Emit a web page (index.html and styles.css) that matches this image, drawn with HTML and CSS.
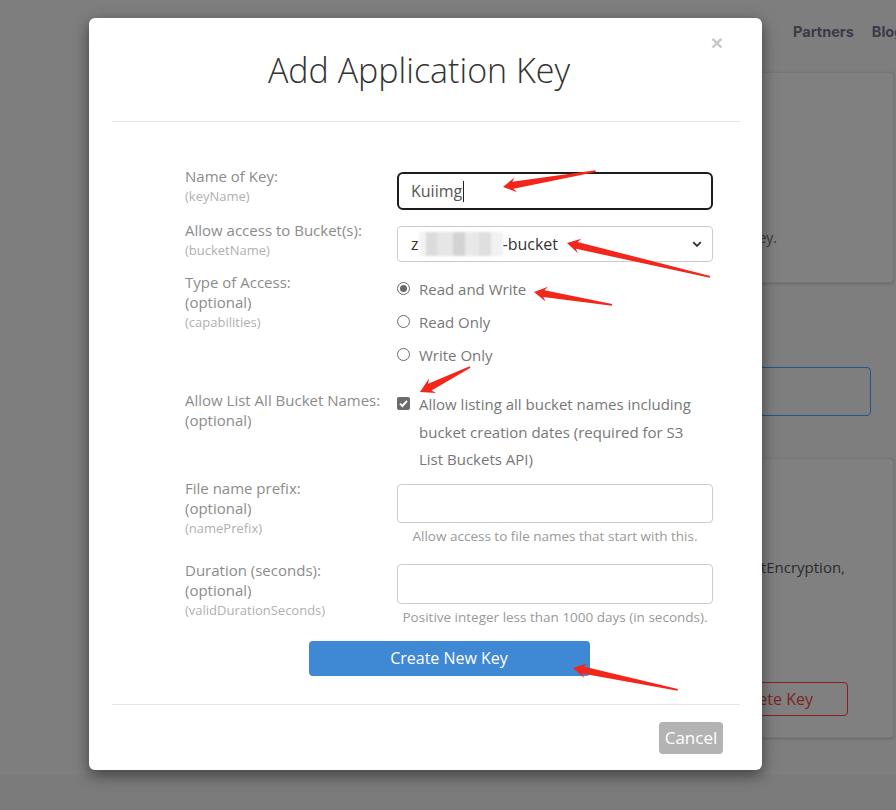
FILE: index.html
```html
<!DOCTYPE html>
<html lang="en">
<head>
<meta charset="utf-8">
<title>Add Application Key</title>
<link rel="stylesheet" href="styles.css">
</head>
<body>
<div class="page">
  <nav class="topnav"><span>Partners</span><span>Blog</span></nav>
  <section class="card card-a"><p class="card-text">Click the Add a New Application Key button to create a key.</p></section>
  <div class="bluebox"></div>
  <section class="card card-b">
    <p class="card-text2">writeFiles, deleteFiles, readBucketEncryption,</p>
    <button class="btn-delete">Delete Key</button>
  </section>
  <footer class="footer"></footer>
</div>

<div class="modal">
  <button class="close">×</button>
  <div class="modal-header"><h1 class="title">Add Application Key</h1></div>
  <div class="modal-body">
    <form class="form">
      <div class="label"><div>Name of Key:</div><div class="sub">(keyName)</div></div>
      <div class="field"><div class="input focused">Kuiimg<span class="caret"></span></div></div>

      <div class="label"><div>Allow access to Bucket(s):</div><div class="sub">(bucketName)</div></div>
      <div class="field"><div class="select"><span class="sel-text">z<span class="mosaic"></span>-bucket</span>
        <svg class="chev" width="10" height="7" viewBox="0 0 10 7"><path d="M1.2 1.2 L5 5 L8.8 1.2" fill="none" stroke="#333" stroke-width="1.8"/></svg></div></div>

      <div class="label"><div>Type of Access:</div><div>(optional)</div><div class="sub">(capabilities)</div></div>
      <div class="field radios">
        <div class="radio-item"><span class="radio on"></span>Read and Write</div>
        <div class="radio-item"><span class="radio"></span>Read Only</div>
        <div class="radio-item"><span class="radio"></span>Write Only</div>
      </div>

      <div class="label row4"><div>Allow List All Bucket Names:</div><div>(optional)</div></div>
      <div class="field row4 check-row">
        <span class="checkbox"><svg width="13" height="13" viewBox="0 0 13 13"><path d="M3 6.6 L5.4 9 L10 3.8" fill="none" stroke="#fff" stroke-width="1.9"/></svg></span>
        <span class="check-text">Allow listing all bucket names including bucket creation dates (required for S3 List Buckets API)</span>
      </div>

      <div class="label row5"><div>File name prefix:</div><div>(optional)</div><div class="sub">(namePrefix)</div></div>
      <div class="field row5"><div class="input plain"></div><div class="hint">Allow access to file names that start with this.</div></div>

      <div class="label row6"><div>Duration (seconds):</div><div>(optional)</div><div class="sub">(validDurationSeconds)</div></div>
      <div class="field row6"><div class="input plain tall"></div><div class="hint">Positive integer less than 1000 days (in seconds).</div></div>

      <div class="actions"><button type="button" class="btn-primary">Create New Key</button></div>
    </form>
  </div>
  <div class="modal-footer"><button class="btn-cancel">Cancel</button></div>
</div>

<svg class="annotations" width="896" height="810" viewBox="0 0 896 810">
  <g fill="#f2261b">
    <polygon points="0,0 13,7.5 10,3.5 94,0.9 94,-0.9 10,-3.5 13,-7.5" transform="translate(503 187) rotate(-9.76)"/>
    <polygon points="0,0 13,7.5 10,3.5 147,0.9 147,-0.9 10,-3.5 13,-7.5" transform="translate(567 243) rotate(13.37)"/>
    <polygon points="0,0 13,7.5 10,3.5 79,0.9 79,-0.9 10,-3.5 13,-7.5" transform="translate(534 292) rotate(9.46)"/>
    <polygon points="0,0 14,8 11,3.8 56,0.9 56,-0.9 11,-3.8 14,-8" transform="translate(420 392) rotate(-26.57)"/>
    <polygon points="0,0 13,7.5 10,3.5 107,0.9 107,-0.9 10,-3.5 13,-7.5" transform="translate(573 668) rotate(11.83)"/>
  </g>
</svg>
</body>
</html>
```

FILE: styles.css
```css
* { box-sizing: border-box; }
html, body { margin: 0; padding: 0; }
body {
  width: 896px;
  height: 810px;
  overflow: hidden;
  position: relative;
  font-family: "Open Sans", "Liberation Sans", sans-serif;
  background: #808080;
}

/* background page (dimmed) */
.page {
  display: flex;
  flex-direction: column;
  height: 810px;
  background: #7e7e7e;
}
.topnav {
  height: 62px;
  display: flex;
  align-items: center;
  gap: 18px;
  padding-left: 793px;
  white-space: nowrap;
  font-family: Inter, "Noto Sans", sans-serif;
  font-weight: 700;
  font-size: 14.5px;
  color: #3a3a48;
}
.card {
  margin-left: 120px;
  margin-right: 2px;
  background: #808080;
  border: 1px solid #767676;
  border-radius: 4px;
  box-shadow: 0 1px 3px rgba(0,0,0,0.18);
}
.card-a {
  margin-top: 10px;
  height: 211px;
  display: flex;
  flex-direction: column;
  justify-content: flex-end;
  padding: 0 116px 34px 0;
}
.card-text {
  margin: 0;
  text-align: right;
  white-space: nowrap;
  overflow: hidden;
  font-size: 14px;
  line-height: 20px;
  color: #3a3a3a;
}
.bluebox {
  margin: 84px 25px 0 120px;
  height: 49px;
  border: 1.5px solid #24558c;
  border-radius: 4px;
}
.card-b {
  margin-top: 42px;
  height: 280px;
  display: flex;
  flex-direction: column;
  align-items: flex-end;
  padding: 98px 0 0 0;
}
.card-text2 {
  margin: 0;
  padding-right: 48px;
  white-space: nowrap;
  overflow: hidden;
  max-width: 100%;
  font-size: 15px;
  line-height: 20px;
  color: #2c2c2c;
}
.btn-delete {
  margin-top: 105px;
  margin-right: 45px;
  width: 200px;
  height: 34px;
  background: transparent;
  border: 1px solid #8a1f1f;
  border-radius: 4px;
  font-family: "Open Sans", sans-serif;
  font-size: 16px;
  color: #7c2424;
  text-align: right;
  padding-right: 34px;
}
.footer {
  margin-top: 37px;
  flex: 1;
  background: #7b7b7b;
}

/* modal */
.modal {
  position: absolute;
  left: 89px;
  top: 18px;
  width: 673px;
  height: 752px;
  background: #fff;
  border-radius: 6px;
  box-shadow: 0 5px 15px rgba(0,0,0,0.5);
  display: flex;
  flex-direction: column;
}
.close {
  position: absolute;
  top: 13px;
  right: 39px;
  border: 0;
  background: none;
  padding: 0;
  font-family: "Liberation Sans", sans-serif;
  font-weight: 700;
  font-size: 21px;
  line-height: 24px;
  color: #c8c8c8;
}
.modal-header {
  margin: 0 22px 0 23px;
  height: 104px;
  padding-top: 32px;
  border-bottom: 1px solid #e5e5e5;
}
.title {
  margin: 0;
  padding-right: 14px;
  text-align: center;
  font-weight: 300;
  font-size: 34px;
  line-height: 40px;
  color: #333;
}
.modal-body {
  margin: 0 22px 0 23px;
  padding: 44px 0 28px 73px;
  border-bottom: 1px solid #e5e5e5;
}
.form {
  display: grid;
  grid-template-columns: 212px 316px;
  row-gap: 10px;
}
.label {
  font-size: 15px;
  line-height: 20px;
  color: #8c8c8c;
}
.label .sub {
  font-size: 13px;
  color: #b0b0b0;
}
.field { min-width: 0; }
.input, .select {
  margin-top: 6px;
  height: 38px;
  border: 1px solid #ccc;
  border-radius: 4px;
  font-size: 16px;
  line-height: 20px;
  color: #555;
}
.input.focused {
  border: 2px solid #1c1c1c;
  border-radius: 6px;
  padding: 7px 12px;
  display: flex;
  align-items: center;
}
.caret {
  display: inline-block;
  width: 1px;
  height: 21px;
  margin-left: 1px;
  background: #222;
}
.select {
  height: 36px;
  display: flex;
  align-items: center;
  padding: 0 10px 0 13px;
  color: #333;
}
.sel-text { white-space: nowrap; }
.mosaic {
  display: inline-block;
  vertical-align: -6px;
  width: 84px;
  height: 24px;
  background:
    linear-gradient(90deg, #f2f2f2 0 8%, #d8d8d8 8% 22%, #e4e4e4 22% 40%, #cfcfcf 40% 55%, #e6e6e6 55% 72%, #dcdcdc 72% 86%, #f0f0f0 86% 100%);
  filter: blur(1.2px);
  opacity: 0.9;
}
.chev { margin-left: auto; }

.radios { display: flex; flex-direction: column; }
.radio-item {
  height: 33px;
  display: flex;
  align-items: center;
  font-size: 15px;
  color: #777;
}
.radio {
  width: 13px;
  height: 13px;
  margin-right: 9px;
  border: 1px solid #6a6a6a;
  border-radius: 50%;
  display: inline-flex;
  align-items: center;
  justify-content: center;
}
.radio.on::after {
  content: "";
  width: 7px;
  height: 7px;
  border-radius: 50%;
  background: #6a6a6a;
}
.row4 { margin-top: 9px; }
.check-row {
  display: flex;
  align-items: flex-start;
  padding-top: 1px;
}
.checkbox {
  flex: none;
  width: 13px;
  height: 13px;
  margin: 6px 9px 0 0;
  border-radius: 2px;
  background: #6b6b6b;
  display: flex;
}
.check-text {
  width: 280px;
  font-size: 15px;
  line-height: 27.5px;
  color: #777;
}
.row5 { margin-top: -6px; }
.input.plain { height: 39px; }
.input.plain.tall { height: 40px; margin-top: 4px; }
.hint {
  margin-top: 3px;
  text-align: center;
  font-size: 13.5px;
  line-height: 20px;
  color: #999;
  white-space: nowrap;
}
.row6 { margin-top: 4px; }
.actions {
  grid-column: 1 / span 2;
  display: flex;
  justify-content: center;
  margin-top: 4px;
}
.btn-primary {
  width: 281px;
  height: 35px;
  border: 0;
  border-radius: 4px;
  background: #3f88d4;
  color: #fff;
  font-family: "Open Sans", sans-serif;
  font-size: 16px;
}
.modal-footer {
  margin: 0 22px 0 23px;
  padding: 17px 17px 0 0;
  display: flex;
  justify-content: flex-end;
}
.btn-cancel {
  width: 64px;
  height: 32px;
  border: 0;
  border-radius: 4px;
  background: #b3b3b3;
  color: #fff;
  font-family: "Open Sans", sans-serif;
  font-size: 17px;
  padding: 0;
}

.annotations {
  position: absolute;
  left: 0;
  top: 0;
  pointer-events: none;
}
```
